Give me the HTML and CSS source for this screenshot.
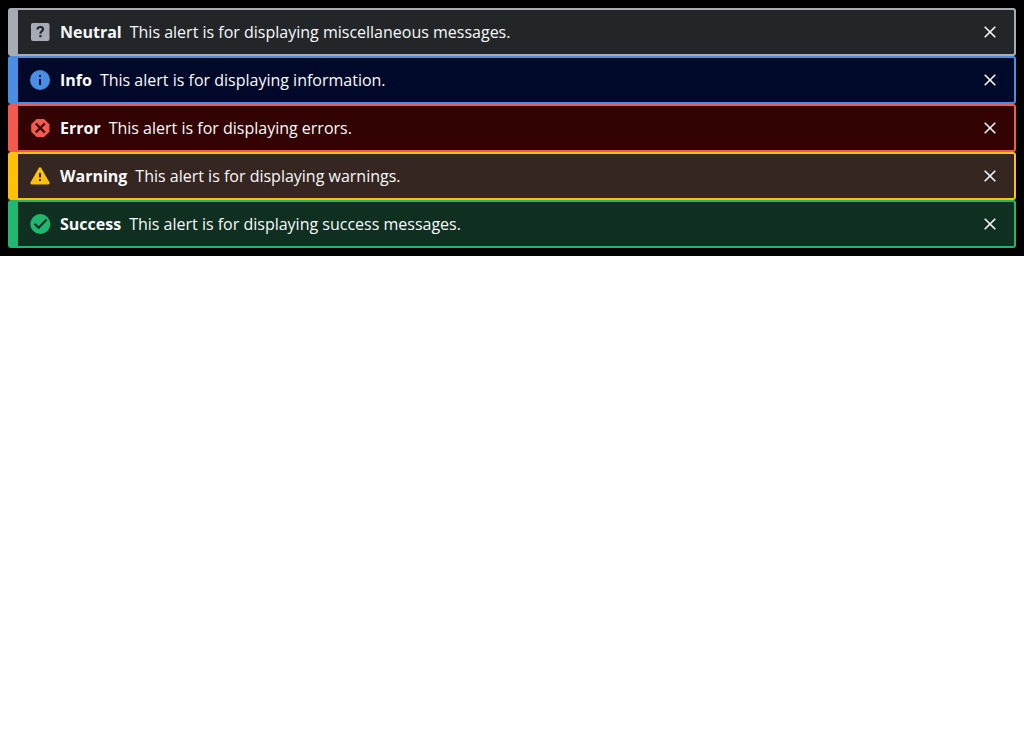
FILE: index.html
```html
<!DOCTYPE html>
<html lang="en">
<head>
<meta charset="utf-8">
<title>Alerts</title>
<link rel="stylesheet" href="styles.css">
</head>
<body>
<main class="alerts">
  <div class="alert alert--neutral" role="status">
    <svg class="alert__icon" viewBox="0 0 20 20" aria-hidden="true">
      <rect class="shape" x="1" y="1" width="18.500" height="18" rx="2"/>
      <path class="line" d="M7.500 7.500C7.600 5.600 8.800 5 10.300 5c1.700 0 2.700.9 2.700 2.300 0 1.900-2.600 2.100-2.600 4.400"/>
      <rect class="mark" x="9.300" y="13" width="2.200" height="2.200"/>
    </svg>
    <div class="alert__text"><strong>Neutral</strong><span>This alert is for displaying miscellaneous messages.</span></div>
    <button class="alert__close" type="button" aria-label="Dismiss neutral alert"><svg viewBox="0 0 12 12" aria-hidden="true"><path d="M.7.7l10.600 10.600M11.300.7L.7 11.300"/></svg></button>
  </div>
  <div class="alert alert--info" role="status">
    <svg class="alert__icon" viewBox="0 0 20 20" aria-hidden="true">
      <circle class="shape" cx="10" cy="10" r="10"/>
      <path class="mark" d="M9 5h2v2H9zM9 9h2v6H9z"/>
    </svg>
    <div class="alert__text"><strong>Info</strong><span>This alert is for displaying information.</span></div>
    <button class="alert__close" type="button" aria-label="Dismiss info alert"><svg viewBox="0 0 12 12" aria-hidden="true"><path d="M.7.7l10.600 10.600M11.300.7L.7 11.300"/></svg></button>
  </div>
  <div class="alert alert--error" role="alert">
    <svg class="alert__icon" viewBox="0 0 20 20" aria-hidden="true">
      <path class="shape" d="M6.700 1h7.300l5.500 5.300v7.400L14 19H6.700L1.200 13.700V6.300z"/>
      <path class="line" d="M5.800 5.500l9 9M14.800 5.500l-9 9"/>
    </svg>
    <div class="alert__text"><strong>Error</strong><span>This alert is for displaying errors.</span></div>
    <button class="alert__close" type="button" aria-label="Dismiss error alert"><svg viewBox="0 0 12 12" aria-hidden="true"><path d="M.7.7l10.600 10.600M11.300.7L.7 11.300"/></svg></button>
  </div>
  <div class="alert alert--warning" role="alert">
    <svg class="alert__icon" viewBox="0 0 20 20" aria-hidden="true">
      <path class="shape" d="M8.800 2q1.200-1.500 2.400 0l8.200 14.300q.7 1.900-1 2.200H1.600q-1.700-.3-1-2.200z"/>
      <path class="mark" d="M9 7h2v4.500H9zM9 13h2v2H9z"/>
    </svg>
    <div class="alert__text"><strong>Warning</strong><span>This alert is for displaying warnings.</span></div>
    <button class="alert__close" type="button" aria-label="Dismiss warning alert"><svg viewBox="0 0 12 12" aria-hidden="true"><path d="M.7.7l10.600 10.600M11.300.7L.7 11.300"/></svg></button>
  </div>
  <div class="alert alert--success" role="status">
    <svg class="alert__icon" viewBox="0 0 20 20" aria-hidden="true">
      <circle class="shape" cx="10.300" cy="10" r="10"/>
      <path class="line" d="M4.500 9.700l4.200 4.100 7.900-8.300"/>
    </svg>
    <div class="alert__text"><strong>Success</strong><span>This alert is for displaying success messages.</span></div>
    <button class="alert__close" type="button" aria-label="Dismiss success alert"><svg viewBox="0 0 12 12" aria-hidden="true"><path d="M.7.7l10.600 10.600M11.300.7L.7 11.300"/></svg></button>
  </div>
</main>
</body>
</html>
```
FILE: styles.css
```css
body {
  margin: 0;
  background: #fff;
  font: 16px/24px "Open Sans", sans-serif;
}

.alerts {
  padding: 8px;
  background: #000;
}

.alert {
  display: flex;
  align-items: center;
  gap: 10px;
  padding: 10px 12px;
  border: 2px solid var(--accent);
  border-left-width: 10px;
  border-radius: 3px;
  background: var(--fill);
  color: #f8f9fa;
}

.alert--neutral { --accent: #a7acb4; --fill: #222629; }
.alert--info { --accent: #488fe3; --fill: #00092a; }
.alert--error { --accent: #f4594f; --fill: #330202; }
.alert--warning { --accent: #ffc107; --fill: #352622; }
.alert--success { --accent: #1fb870; --fill: #0f2f21; }

.alert__icon {
  flex: none;
  width: 20px;
  height: 20px;
  overflow: visible;
}

.shape { fill: var(--accent); }
.mark { fill: var(--fill); }
.line { fill: none; stroke: var(--fill); stroke-width: 2.2; }

.alert__text {
  display: flex;
  flex: 1;
  flex-wrap: wrap;
  column-gap: 8px;
}

.alert__close {
  display: grid;
  place-items: center;
  width: 24px;
  height: 24px;
  padding: 0;
  border: 0;
  background: none;
  color: inherit;
  cursor: pointer;
}

.alert__close svg {
  width: 12px;
  height: 12px;
  fill: none;
  stroke: currentColor;
  stroke-width: 1.6;
}
```
